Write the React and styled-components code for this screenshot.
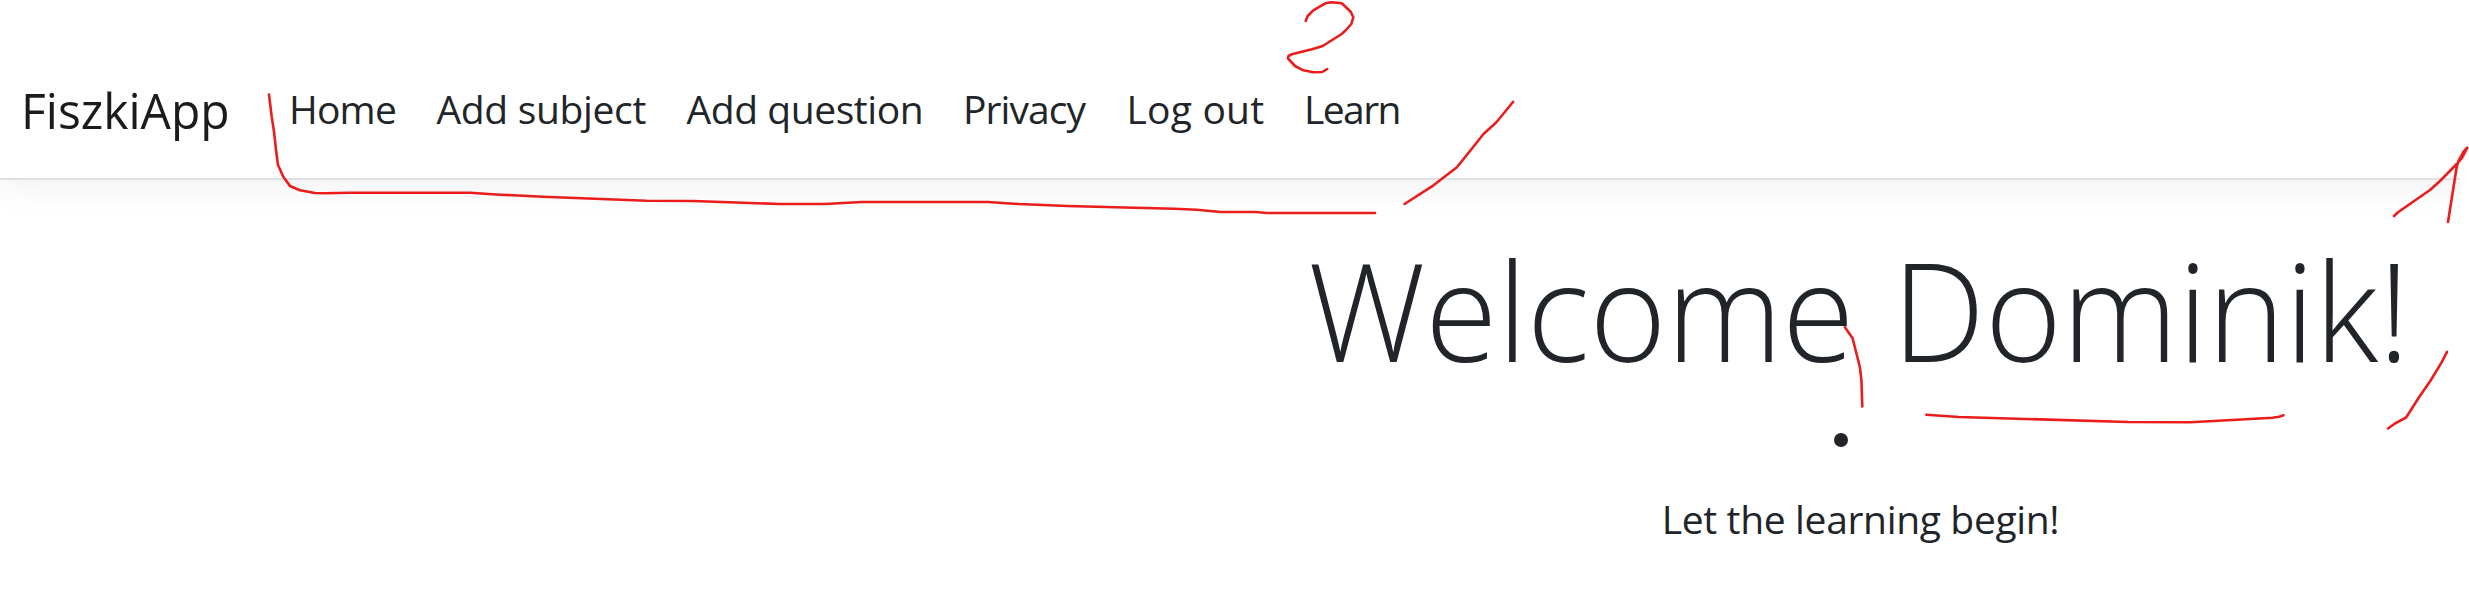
import React from 'react';
import styled, { createGlobalStyle } from 'styled-components';

const GlobalStyle = createGlobalStyle`
  *, *::before, *::after { box-sizing: border-box; }
  body {
    margin: 0;
    background: #fff;
    color: #212529;
    font-family: "Open Sans", "Noto Sans", sans-serif;
  }
`;

const Viewport = styled.div`
  position: relative;
  width: 2469px;
  height: 615px;
  overflow: hidden;
`;

const Window = styled.div`
  width: 2460px;
  height: 615px;
  overflow: hidden;
`;

const Page = styled.div`
  width: 3722px;
`;

const Header = styled.header`
  display: flex;
  align-items: center;
  height: 180px;
  padding: 42px 20px 0 21px;
  border-bottom: 2px solid #dee2e6;
  box-shadow: 0 10px 30px rgba(0, 0, 0, 0.05);
`;

const Brand = styled.a`
  width: 268px;
  font-size: 50px;
  line-height: 75px;
  color: #1b1b1b;
  transform: scaleX(0.96);
  transform-origin: left center;
`;

const Nav = styled.nav`
  display: flex;
  gap: 40px;
  padding-bottom: 2px;
`;

const NavLink = styled.a`
  width: ${(p) => p.$width}px;
  font-size: 39px;
  line-height: 60px;
  letter-spacing: ${(p) => p.$tracking}px;
  white-space: nowrap;
`;

const Main = styled.main`
  display: flex;
  flex-direction: column;
  align-items: center;
  padding-top: 45px;
`;

const Title = styled.h1`
  margin: 0;
  padding-right: 5px;
  font-size: 137px;
  font-weight: 300;
  line-height: 168px;
  word-spacing: 4px;
  white-space: nowrap;
  transform: scaleX(0.958);
`;

const List = styled.ul`
  margin: 0;
  padding: 40px 40px 42px 0;
  list-style: none;
`;

const Bullet = styled.li`
  width: 14px;
  height: 14px;
  border-radius: 50%;
  background: #212529;
`;

const Lead = styled.p`
  margin: 0;
  padding-right: 1px;
  font-size: 39px;
  line-height: 60px;
  letter-spacing: -0.34px;
`;

const Ink = styled.svg`
  position: absolute;
  inset: 0;
  pointer-events: none;
  fill: none;
  stroke: #ea1c1c;
  stroke-width: 2.6;
  stroke-linecap: round;
  stroke-linejoin: round;
`;

const links = [
  { label: 'Home', width: 107.5, tracking: -0.8 },
  { label: 'Add subject', width: 210, tracking: -0.34 },
  { label: 'Add question', width: 236.5, tracking: -0.43 },
  { label: 'Privacy', width: 123.5, tracking: -0.95 },
  { label: 'Log out', width: 137.5, tracking: 0.2 },
  { label: 'Learn', width: 97, tracking: -1.6 },
];

const strokes = [
  '269,94.5 271.7,116.7 274,131.7 276,150 278,165 283.3,176.7 290,186 300,190.3 315,193 325,193.3 350,192.7 470,192.7 500,194.7 543,196.7 646.7,200.7 693,201 780,204 825,204 861.7,202 987.7,202 1019,204 1067,206 1174,208.7 1196.8,209.7 1220.8,212 1256,212 1267,213 1375,213',
  '1404.5,204 1433.5,185.3 1456.9,167.3 1470,151 1483.5,134 1496.4,122.3 1513.2,101.8',
  '1305.7,21 1307.7,16 1313.3,10.3 1325.3,3.3 1331.7,2.2 1341.7,3.3 1350.7,11.7 1353.3,17.3 1351.3,24 1346,30 1341.7,34 1322.7,46 1312,49.3 1291.7,54.3 1288.5,56 1288,58.5 1295,66 1303.3,70.3 1313.3,72.3 1322.3,72 1327.3,69',
  '1844.8,327 1852.6,338.3 1859.8,366.7 1861.4,380 1862.3,406.5',
  '1926.3,414.7 1958.9,417 2128,422 2190,422.3 2236.9,419.7 2272.6,417.7 2279,416.7 2283.5,415.3',
  '2388,428.5 2395,423.5 2405.9,417.7 2410,411.5 2419,397.3 2430.3,381 2441.6,362.3 2447,351.8',
  '2394,216 2398,212.3 2430,190 2440,181 2456.7,164 2462,158 2467.3,147.7 2463.3,152 2458.5,161 2456.7,167 2448,222',
];

export default function App() {
  return (
    <Viewport>
      <GlobalStyle />
      <Window>
        <Page>
          <Header>
            <Brand>FiszkiApp</Brand>
            <Nav>
              {links.map((link) => (
                <NavLink key={link.label} $width={link.width} $tracking={link.tracking}>
                  {link.label}
                </NavLink>
              ))}
            </Nav>
          </Header>
          <Main>
            <Title>Welcome Dominik!</Title>
            <List>
              <Bullet />
            </List>
            <Lead>Let the learning begin!</Lead>
          </Main>
        </Page>
      </Window>
      <Ink width="2469" height="615" viewBox="0 0 2469 615" aria-hidden="true">
        {strokes.map((points) => (
          <polyline key={points} points={points} />
        ))}
      </Ink>
    </Viewport>
  );
}
